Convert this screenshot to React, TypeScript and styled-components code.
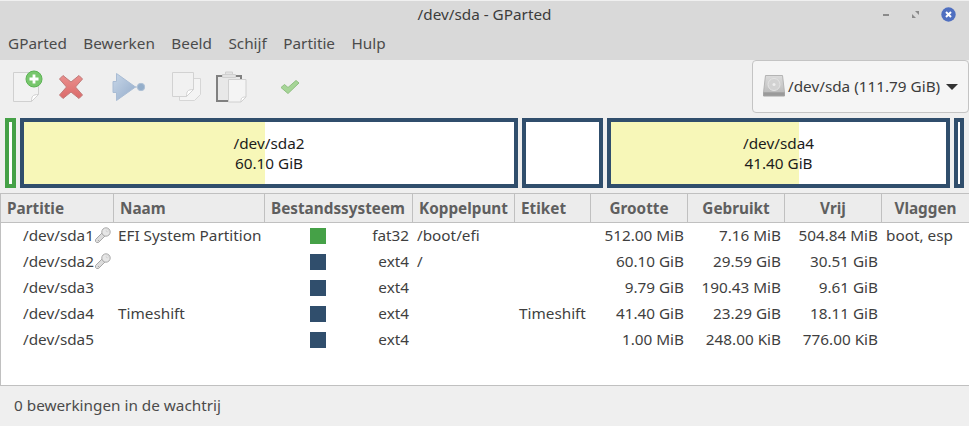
import * as React from 'react';
import styled, {createGlobalStyle} from 'styled-components';

const GlobalStyle = createGlobalStyle`
    html, body {
        margin: 0;
        padding: 0;
        background: #efefef;
    }
    body {
        font-family: "Noto Sans", "Open Sans", sans-serif;
        font-size: 15.3px;
    }
`
const Window = styled.div`
    width: 969px;
    height: 426px;
    display: flex;
    flex-direction: column;
    overflow: hidden;
`
const TitleBar = styled.div`
    height: 32px;
    flex: none;
    box-sizing: border-box;
    padding-bottom: 6px;
    display: flex;
    align-items: center;
    justify-content: center;
    position: relative;
    background: #d9d9d9;
    border-top: 1px solid #f0f0f0;
    color: #3c3c3c;
`
const WindowButtons = styled.div`
    position: absolute;
    right: 13px;
    top: 6px;
    display: flex;
    align-items: center;
    gap: 22px;
`
const MenuBar = styled.div`
    height: 28px;
    flex: none;
    box-sizing: border-box;
    padding: 0 8px 7px;
    display: flex;
    align-items: center;
    gap: 16.5px;
    background: #d9d9d9;
    color: #4b4b4b;
`
const Toolbar = styled.div`
    height: 53px;
    flex: none;
    display: flex;
    align-items: center;
    justify-content: space-between;
    padding-left: 12px;
`
const ToolIcons = styled.div`
    display: flex;
    align-items: center;
`
const ToolIcon = styled.span<{$width: number}>`
    display: flex;
    width: ${p => p.$width}px;
`
const DiskSelect = styled.div`
    width: 217px;
    height: 53px;
    box-sizing: border-box;
    display: flex;
    align-items: center;
    gap: 2px;
    padding: 0 0 2px 9px;
    background: #f5f5f5;
    border: 1px solid #c4c4c4;
    border-radius: 4px;
    color: #3c3c3c;
    white-space: nowrap;
`
const Caret = styled.span`
    width: 0;
    height: 0;
    margin: 2px 0 0 4px;
    border-left: 6px solid transparent;
    border-right: 6px solid transparent;
    border-top: 6px solid #333333;
`
const PartitionMap = styled.div`
    height: 70px;
    flex: none;
    margin-top: 5px;
    display: flex;
    gap: 4px;
    padding: 0 5px;
`
const PartitionBlock = styled.div<{$width: number; $used: number; $color: string}>`
    width: ${p => p.$width}px;
    flex: none;
    box-sizing: border-box;
    padding-bottom: 1px;
    display: flex;
    flex-direction: column;
    align-items: center;
    justify-content: center;
    border: 4px solid ${p => p.$color};
    background: linear-gradient(to right, #f7f7b8 ${p => p.$used}px, #ffffff ${p => p.$used}px);
    color: #1c1c1c;
    line-height: 20px;
`
const Table = styled.div`
    margin-top: 5px;
    height: 193px;
    flex: none;
    box-sizing: border-box;
    background: #ffffff;
    border-left: 1px solid #c0c0c0;
    border-bottom: 1px solid #c0c0c0;
`
const COLUMNS = '113px 151px 148px 102px 76px 97px 97px 97px 87px';
const HeaderRow = styled.div`
    display: grid;
    grid-template-columns: ${COLUMNS};
    height: 30px;
    box-sizing: border-box;
    background: #ececec;
    border-top: 1px solid #c0c0c0;
    border-bottom: 1px solid #c0c0c0;
`
const HeaderCell = styled.div<{$center?: boolean}>`
    display: flex;
    align-items: center;
    justify-content: ${p => (p.$center ? 'center' : 'flex-start')};
    padding-left: ${p => (p.$center ? 0 : 6)}px;
    border-right: 1px solid #c0c0c0;
    font-weight: 700;
    color: #5f5f5f;
    white-space: nowrap;
    &:last-child {
        border-right: none;
    }
`
const Row = styled.div`
    display: grid;
    grid-template-columns: ${COLUMNS};
    height: 26px;
    color: #3f3f3f;
`
const Cell = styled.div<{$right?: boolean}>`
    display: flex;
    align-items: center;
    justify-content: ${p => (p.$right ? 'flex-end' : 'flex-start')};
    padding: ${p => (p.$right ? '0 4px 2px 0' : '0 0 2px 4px')};
    white-space: nowrap;
`
const PartitionCell = styled(Cell)`
    padding-left: 22px;
    gap: 1px;
`
const FsCell = styled(Cell)`
    justify-content: flex-end;
    padding: 0 4px 2px 0;
    position: relative;
`
const Swatch = styled.span<{$color: string}>`
    position: absolute;
    left: 45px;
    top: 5px;
    width: 16px;
    height: 16px;
    background: ${p => p.$color};
`
const StatusBar = styled.div`
    flex: 1;
    display: flex;
    align-items: center;
    padding: 0 0 2px 14px;
    color: #4b4b4b;
`

const GREEN = '#45a147';
const BLUE = '#304e6c';

const menus = ['GParted', 'Bewerken', 'Beeld', 'Schijf', 'Partitie', 'Hulp'];

const blocks = [
    {width: 11, used: 0, color: GREEN},
    {width: 498, used: 241, color: BLUE, name: '/dev/sda2', size: '60.10 GiB'},
    {width: 81, used: 0, color: BLUE},
    {width: 343, used: 188, color: BLUE, name: '/dev/sda4', size: '41.40 GiB'},
    {width: 10, used: 0, color: BLUE},
];

const headers = [
    {label: 'Partitie'},
    {label: 'Naam'},
    {label: 'Bestandssysteem'},
    {label: 'Koppelpunt'},
    {label: 'Etiket'},
    {label: 'Grootte', center: true},
    {label: 'Gebruikt', center: true},
    {label: 'Vrij', center: true},
    {label: 'Vlaggen', center: true},
];

const rows = [
    {part: '/dev/sda1', key: true, name: 'EFI System Partition', fs: 'fat32', color: GREEN, mount: '/boot/efi', label: '', size: '512.00 MiB', used: '7.16 MiB', free: '504.84 MiB', flags: 'boot, esp'},
    {part: '/dev/sda2', key: true, name: '', fs: 'ext4', color: BLUE, mount: '/', label: '', size: '60.10 GiB', used: '29.59 GiB', free: '30.51 GiB', flags: ''},
    {part: '/dev/sda3', key: false, name: '', fs: 'ext4', color: BLUE, mount: '', label: '', size: '9.79 GiB', used: '190.43 MiB', free: '9.61 GiB', flags: ''},
    {part: '/dev/sda4', key: false, name: 'Timeshift', fs: 'ext4', color: BLUE, mount: '', label: 'Timeshift', size: '41.40 GiB', used: '23.29 GiB', free: '18.11 GiB', flags: ''},
    {part: '/dev/sda5', key: false, name: '', fs: 'ext4', color: BLUE, mount: '', label: '', size: '1.00 MiB', used: '248.00 KiB', free: '776.00 KiB', flags: ''},
];

const NewIcon = () => (
    <svg width="32" height="34" viewBox="0 0 32 34">
        <path d="M1.500 2.500h25v22l-7 7h-18z" fill="#f2f2f2" stroke="#d0d0d0" />
        <path d="M19.500 31.500c0-5 1-7 7-7z" fill="#ffffff" stroke="#d0d0d0" />
        <circle cx="22" cy="9" r="8" fill="#78c76d" stroke="#5cb354" />
        <path d="M22 4.500v9M17.500 9h9" stroke="#ffffff" strokeWidth="2.800" />
    </svg>
);

const DeleteIcon = () => (
    <svg width="26" height="26" viewBox="0 0 26 26">
        <defs>
            <linearGradient id="deleteFill" x1="0" y1="0" x2="0" y2="1">
                <stop offset="0" stopColor="#ea8f8d" />
                <stop offset="1" stopColor="#db6a69" />
            </linearGradient>
        </defs>
        <path d="M5 1.500l8 6.500 8-6.500 3.500 3.500-7 8 7 8-3.500 3.500-8-6.500-8 6.500-3.500-3.500 7-8-7-8z" fill="url(#deleteFill)" stroke="#c07a79" strokeLinejoin="round" />
    </svg>
);

const ApplyIcon = () => (
    <svg width="34" height="30" viewBox="0 0 34 30">
        <defs>
            <linearGradient id="arrowFill" x1="0" y1="0" x2="1" y2="1">
                <stop offset="0" stopColor="#c8d7e8" />
                <stop offset="1" stopColor="#93abca" />
            </linearGradient>
        </defs>
        <path d="M4.500 1.500l19 13.500-19 13.500v-8h-3.500v-11h3.500z" fill="url(#arrowFill)" stroke="#a9bcd4" />
        <path d="M23 15h4" stroke="#a9bcd4" />
        <circle cx="29" cy="15" r="3.700" fill="#94aeca" stroke="#afc1d6" />
    </svg>
);

const CopyIcon = () => (
    <svg width="31" height="31" viewBox="0 0 31 31">
        <path d="M8.500 7.500h21v16l-6 6h-15z" fill="#f4f4f4" stroke="#d6d6d6" />
        <path d="M1.500 1.500h21v17l-7 7h-14z" fill="#f1f1f1" stroke="#d2d2d2" />
        <path d="M15.500 25.500c0-5 1-7 7-7z" fill="#ffffff" stroke="#d2d2d2" />
    </svg>
);

const PasteIcon = () => (
    <svg width="31" height="32" viewBox="0 0 31 32">
        <path d="M1 5h24v25h-24z" fill="#e8e8e8" stroke="#808080" strokeWidth="2" />
        <path d="M9.500 3.500v-2.500h7v2.500zM6.500 3.500h13v3h-13z" fill="#e2e2e2" stroke="#cfcfcf" />
        <path d="M12.500 8.500h17.500v17.500l-5 5h-12.500z" fill="#f4f4f4" stroke="#d0d0d0" />
        <path d="M25 31c0-4 .5-5 5-5z" fill="#ffffff" stroke="#d0d0d0" />
    </svg>
);

const CheckIcon = () => (
    <svg width="20" height="16" viewBox="0 0 20 16">
        <path d="M1 8.500l3.500-3 3.500 3 8-7 3 2.500-11 10.500z" fill="#a6d597" stroke="#8fbf80" strokeLinejoin="round" />
    </svg>
);

const DriveIcon = () => (
    <svg width="24" height="24" viewBox="0 0 24 24">
        <defs>
            <linearGradient id="driveFill" x1="0" y1="0" x2="0" y2="1">
                <stop offset="0" stopColor="#dcdcdc" />
                <stop offset="1" stopColor="#bcbcbc" />
            </linearGradient>
        </defs>
        <path d="M3.500 1.500h17l2 17h-21z" fill="url(#driveFill)" stroke="#b4b4b4" />
        <circle cx="12" cy="10.500" r="6" fill="#d2d2d2" stroke="#e4e4e4" />
        <circle cx="12" cy="10.500" r="1.500" fill="#eeeeee" />
        <path d="M1.500 18.500h21v3.500h-21z" fill="#9a9a9a" stroke="#a4a4a4" />
    </svg>
);

const KeyIcon = () => (
    <svg width="16" height="16" viewBox="0 0 16 16">
        <path d="M.5 12.500l6.500-6.500 3 3-6.500 6.500h-2l-1-1zM3 13l1.500 1.500" fill="#dcdcdc" stroke="#a8a8a8" />
        <circle cx="11" cy="5" r="4.200" fill="#e6e6e6" stroke="#a8a8a8" />
        <circle cx="12.200" cy="3.800" r="1" fill="#ffffff" stroke="#b4b4b4" strokeWidth=".5" />
    </svg>
);

const WindowControls = () => (
    <WindowButtons>
        <svg width="7" height="4" viewBox="0 0 7 4"><path d="M0 1h6v2h-6z" fill="#8a8a8a" /></svg>
        <svg width="7" height="7" viewBox="0 0 7 7"><path d="M3 0h4v4zM0 3l4 4h-4z" fill="#8a8a8a" /></svg>
        <svg width="15" height="15" viewBox="0 0 15 15">
            <circle cx="7.500" cy="7.500" r="7.200" fill="#4f6fc0" />
            <path d="M5 5l5 5M10 5l-5 5" stroke="#ffffff" strokeWidth="2" />
        </svg>
    </WindowButtons>
);

export default function App() {
    return (
        <>
            <GlobalStyle />
            <Window>
                <TitleBar>
                    /dev/sda - GParted
                    <WindowControls />
                </TitleBar>
                <MenuBar>
                    {menus.map(m => <span key={m}>{m}</span>)}
                </MenuBar>
                <Toolbar>
                    <ToolIcons>
                        <ToolIcon $width={46}><NewIcon /></ToolIcon>
                        <ToolIcon $width={54}><DeleteIcon /></ToolIcon>
                        <ToolIcon $width={59}><ApplyIcon /></ToolIcon>
                        <ToolIcon $width={45}><CopyIcon /></ToolIcon>
                        <ToolIcon $width={64}><PasteIcon /></ToolIcon>
                        <ToolIcon $width={20}><CheckIcon /></ToolIcon>
                    </ToolIcons>
                    <DiskSelect>
                        <DriveIcon />
                        /dev/sda (111.79 GiB)
                        <Caret />
                    </DiskSelect>
                </Toolbar>
                <PartitionMap>
                    {blocks.map((b, i) => (
                        <PartitionBlock key={i} $width={b.width} $used={b.used} $color={b.color}>
                            {b.name && <span>{b.name}</span>}
                            {b.size && <span>{b.size}</span>}
                        </PartitionBlock>
                    ))}
                </PartitionMap>
                <Table>
                    <HeaderRow>
                        {headers.map(h => (
                            <HeaderCell key={h.label} $center={h.center}>{h.label}</HeaderCell>
                        ))}
                    </HeaderRow>
                    {rows.map(r => (
                        <Row key={r.part}>
                            <PartitionCell>
                                {r.part}
                                {r.key && <KeyIcon />}
                            </PartitionCell>
                            <Cell>{r.name}</Cell>
                            <FsCell>
                                <Swatch $color={r.color} />
                                {r.fs}
                            </FsCell>
                            <Cell>{r.mount}</Cell>
                            <Cell>{r.label}</Cell>
                            <Cell $right>{r.size}</Cell>
                            <Cell $right>{r.used}</Cell>
                            <Cell $right>{r.free}</Cell>
                            <Cell>{r.flags}</Cell>
                        </Row>
                    ))}
                </Table>
                <StatusBar>0 bewerkingen in de wachtrij</StatusBar>
            </Window>
        </>
    );
}
